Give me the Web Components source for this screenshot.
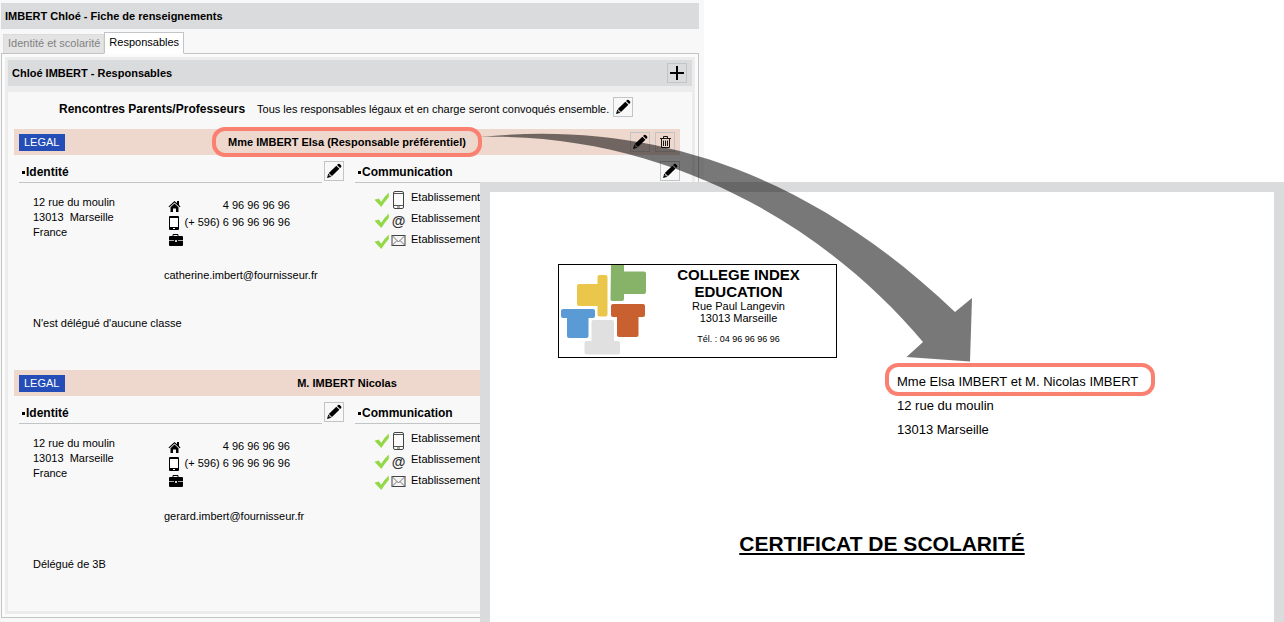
<!DOCTYPE html>
<html lang="fr">
<head>
<meta charset="utf-8">
<meta name="viewport" content="width=device-width, initial-scale=1">
<title>Fiche de renseignements</title>
<style>
  html, body { margin: 0; }
  body { background: #fff; color: #000; font: 11px/15px "Liberation Sans", Arial, sans-serif; }
</style>
</head>
<body>
<responsables-page></responsables-page>

<script>
const define = (name, html, setup) => {
  const template = document.createElement('template');
  template.innerHTML = html;
  customElements.define(name, class extends HTMLElement {
    constructor() {
      super();
      this.attachShadow({ mode: 'open' }).append(template.content.cloneNode(true));
    }
    connectedCallback() { if (setup) setup(this, this.shadowRoot); }
  });
};

const ICONS = {
  pencil: [20, 20, '<path d="M3 17l1.300-4.400 3.200 3.100z"/><path d="M4.800 11.900L12.300 4.700l3.100 3-7.400 7.400z"/><path d="M13 4l1.100-1q.8-.6 1.600.1l1.400 1.400q.7.8 0 1.500l-1 1z"/><path d="M4.800 14.200l1.200 1.200" stroke="#bbb" stroke-width="1"/>'],
  plus: [20, 20, '<path d="M9 3h2v6h6v2h-6v6H9v-6H3V9h6z"/>'],
  trash: [20, 20, '<path d="M5 6.500h11M8.500 6V4.500h4V6M6.500 7v8.500h8V7M8.500 8.500v5.500M10.500 8.500v5.500M12.500 8.500v5.500" fill="none" stroke="#000" stroke-width=".9"/>'],
  home: [14, 14, '<path d="M.5 7.500L6.500 2l2.500 2.200V2h2v4l1.500 1.500-.8.800-5.200-4.700-5.200 4.700z"/><path d="M2.500 8.200l4-3.600 4 3.600V13H8V9.500H5V13H2.500z"/>'],
  tablet: [14, 14, '<rect x="1" y="0" width="10" height="14" rx="1"/><path d="M2 2h8v9H2z" fill="#fff"/><path d="M5 12h2v1H5z" fill="#fff"/>'],
  briefcase: [15, 14, '<path d="M5 3.500v-2h5v2" fill="none" stroke="#000"/><rect x="1" y="3" width="14" height="10" rx="1"/><path d="M1 7.500h5M10 7.500h5" stroke="#aaa"/><path d="M7 7h2v2H7z" fill="#ccc"/>'],
  check: [16, 20, '<path d="M.5 9.800l4.200-1.300 2.500 3.300Q10.500 6.500 14.800 2.500v4.600Q10.500 12 7.300 17z" fill="#93d846"/>'],
  phone: [15, 20, '<rect x="2.500" y="1.500" width="10" height="17" rx="1.500" fill="#fbfbfb" stroke="#444"/><path d="M2.500 3.500h10M2.500 15.500h10M6 17h3" stroke="#555"/>'],
  mail: [15, 20, '<rect x="1" y="3.500" width="13" height="10" fill="#f5f5f5" stroke="#444"/><path d="M1 3.500l6.500 6.500 6.500-6.500M1 13.500l5-5M14 13.500L9 8.500" fill="none" stroke="#777"/>']
};

customElements.define('ui-icon', class extends HTMLElement {
  connectedCallback() {
    const [w, h, shape] = ICONS[this.getAttribute('name')];
    if (this.shadowRoot) return;
    this.attachShadow({ mode: 'open' }).innerHTML =
      `<style>:host{display:block;flex:none}svg{display:block}</style>
       <svg width="${w}" height="${h}" viewBox="0 0 ${w} ${h}" aria-hidden="true">${shape}</svg>`;
  }
});

define('icon-button', `
  <style>
    :host { display: block; flex: none; }
    button { display: block; width: 20px; height: 20px; box-sizing: border-box;
      padding: 0; border: 1px solid #c3c4c6; background: transparent; }
    ui-icon { margin: -1px; }
  </style>
  <button type="button"><ui-icon name="plus"></ui-icon></button>`,
  (host, root) => {
    const icon = document.createElement('ui-icon');
    icon.setAttribute('name', host.getAttribute('icon'));
    root.querySelector('button').setAttribute('aria-label', host.getAttribute('label'));
    root.querySelector('button').replaceChildren(icon);
  });

define('title-bar', `
  <style>
    :host { display: flex; align-items: center; justify-content: space-between; height: 26px;
      padding: 0 5px 0 4px; background: #dadbdd; }
    h2 { margin: 0; font: bold 11px/15px "Liberation Sans", Arial, sans-serif; }
  </style>
  <h2><slot></slot></h2><slot name="action"></slot>`);

define('tab-strip', `
  <style>
    :host { display: block; padding: 0 2px; margin-bottom: -1px; }
    nav { display: flex; align-items: flex-end; }
    button { font: inherit; border: 0; box-sizing: border-box; margin: 0; white-space: nowrap; }
    .off { height: 19px; margin-bottom: 1px; color: #818181; background: #e3e3e3;
      border: 1px solid #dcdcdc; border-bottom: 0; padding: 0 3px 2px 4px; }
    .on { height: 22px; background: #fff; border: 1px solid #c3c4c6; border-bottom-color: #fff;
      color: #000; padding: 0 4px 2px; z-index: 1; }
  </style>
  <nav role="tablist">
    <button class="off" type="button" role="tab" aria-selected="false">Identité et scolarité</button>
    <button class="on" type="button" role="tab" aria-selected="true">Responsables</button>
  </nav>`);

define('high-light', `
  <style>
    :host { display: block; border: 4px solid #fa8072; border-radius: 13px; white-space: nowrap; }
  </style><slot></slot>`);

define('section-head', `
  <style>
    :host { display: flex; align-items: flex-end; gap: 2px; height: 28px; }
    h4 { flex: 1; margin: 0; padding: 0 0 2px 3px; border-bottom: 1px solid #c3c4c6;
      display: flex; align-items: center; gap: 1px; font: bold 12px/15px "Liberation Sans", Arial, sans-serif; }
    h4::before { content: ""; width: 3px; height: 3px; background: #000; }
    icon-button { margin-bottom: 2px; }
  </style>
  <h4><slot></slot></h4><icon-button icon="pencil" label="Modifier"></icon-button>`);

define('channel-row', `
  <style>
    :host { display: flex; gap: 1px; height: 21px; }
    .sign { width: 15px; text-align: center; font: bold 14px/20px "Liberation Sans", Arial, sans-serif; color: #333; }
    .text { padding-left: 4px; white-space: nowrap; }
  </style>
  <ui-icon name="check"></ui-icon><span class="sign"></span><span class="text">Etablissement</span>`,
  (host, root) => {
    const kind = host.getAttribute('kind');
    root.querySelector('.sign').innerHTML = kind === 'email' ? '@' : `<ui-icon name="${kind}"></ui-icon>`;
  });

define('guardian-card', `
  <style>
    :host { display: block; }
    header { display: grid; grid-template: 26px / 1fr auto 1fr; align-items: center;
      padding: 0 5px; background: #eed7cc; }
    .badge { justify-self: start; padding: 1px 6px 1px 5px; background: #244db7; color: #fff; }
    h3 { margin: 0; font: bold 11px/22px "Liberation Sans", Arial, sans-serif; white-space: nowrap; }
    high-light { padding: 0 12px; }
    .tools { display: flex; gap: 5px; justify-self: end; }
    .columns { display: grid; grid-template-columns: 1fr 1fr; gap: 11px; padding-left: 5px; }
    .identity { display: grid; grid-template-columns: 131px 1fr; row-gap: 33px; padding: 12px 0 39px 14px; }
    address { font-style: normal; }
    ul { list-style: none; margin: 0; padding: 2px 0 20px 4px; }
    li { display: grid; grid-template-columns: 14px 106px; gap: 2px; align-items: center; height: 17px; text-align: right; white-space: nowrap; }
    .mail { color: inherit; text-decoration: none; }
    .role { grid-column: 1 / -1; }
    .channels { padding: 7px 0 0 19px; }
  </style>
  <header>
    <span class="badge">LEGAL</span>
    <h3></h3>
    <span class="tools"></span>
  </header>
  <div class="columns">
    <section>
      <section-head>Identité</section-head>
      <div class="identity">
        <address>12 rue du moulin<br>13013&nbsp; Marseille<br>France</address>
        <div>
          <ul>
            <li><ui-icon name="home"></ui-icon><span>4 96 96 96 96</span></li>
            <li><ui-icon name="tablet"></ui-icon><span>(+ 596) 6 96 96 96 96</span></li>
            <li><ui-icon name="briefcase"></ui-icon></li>
          </ul>
          <a class="mail"></a>
        </div>
        <div class="role"><slot></slot></div>
      </div>
    </section>
    <section>
      <section-head>Communication</section-head>
      <div class="channels">
        <channel-row kind="phone"></channel-row>
        <channel-row kind="email"></channel-row>
        <channel-row kind="mail"></channel-row>
      </div>
    </section>
  </div>`,
  (host, root) => {
    const name = host.getAttribute('name');
    const mail = root.querySelector('.mail');
    mail.textContent = host.getAttribute('mail');
    mail.href = 'mailto:' + mail.textContent;
    if (host.hasAttribute('preferred')) {
      root.querySelector('h3').innerHTML = `<high-light>${name}</high-light>`;
      root.querySelector('.tools').innerHTML =
        '<icon-button icon="pencil" label="Modifier"></icon-button><icon-button icon="trash" label="Supprimer"></icon-button>';
    } else root.querySelector('h3').textContent = name;
  });

define('student-panel', `
  <style>
    :host { display: block; background: #f8f8f8; padding: 3px 5px 4px 1px; }
    tab-strip { margin-top: 3px; }
    .sheet { border: 1px solid #c3c4c6; padding: 3px; background: #fbfbfb; }
    .frame { background: #ececec; padding: 3px; }
    .content { margin-top: 6px; background: #f8f8f8; padding: 0 12px 0 6px; }
    .meeting { display: flex; padding: 5px 0 12px 45px; gap: 4px; }
    .meeting p { display: flex; gap: 12px; margin: 0; padding-top: 5px; white-space: nowrap; }
    .meeting b { font-size: 12px; }
  </style>
  <title-bar>IMBERT Chloé - Fiche de renseignements</title-bar>
  <tab-strip></tab-strip>
  <div class="sheet"><div class="frame">
    <title-bar>Chloé IMBERT - Responsables<icon-button slot="action" icon="plus" label="Ajouter un responsable"></icon-button></title-bar>
    <div class="content">
      <div class="meeting">
        <p><b>Rencontres Parents/Professeurs</b><span>Tous les responsables légaux et en charge seront convoqués ensemble.</span></p>
        <icon-button icon="pencil" label="Modifier"></icon-button>
      </div>
      <guardian-card preferred name="Mme IMBERT Elsa (Responsable préférentiel)" mail="catherine.imbert@fournisseur.fr">N'est délégué d'aucune classe</guardian-card>
      <guardian-card name="M. IMBERT Nicolas" mail="gerard.imbert@fournisseur.fr">Délégué de 3B</guardian-card>
    </div>
  </div></div>`);

define('letter-head', `
  <style>
    :host { display: flex; width: 277px; border: 1px solid #000; }
    svg { display: block; flex: none; }
    div { flex: 1; padding: 1px 8px 11px 0; text-align: center; line-height: 12px; }
    h2 { margin: 0; font: bold 15px/17px "Liberation Sans", Arial, sans-serif; }
    p { margin: 0; }
    .tel { margin-top: 9px; font-size: 9px; }
  </style>
  <svg width="90" height="92" viewBox="559 265 90 92" role="img" aria-label="Logo">
    <path d="M611 265h13v6.500h20q2 0 2 2V292q0 2-2 2h-20v5q0 2-2 2h-10q-1.500 0-1.500-2z" fill="#87b368"/>
    <path d="M579 284h18.500v-7q0-2 2-2h6q2 0 2 2v37.500q0 2-2 2h-6q-2 0-2-2V306H579q-2 0-2-2v-18q0-2 2-2z" fill="#eac74a"/>
    <path d="M563 309h30q2 0 2 2v5q0 2-2 2h-4.500v18q0 2-2 2H569q-2 0-2-2v-18h-4q-2 0-2-2v-5q0-2 2-2z" fill="#5b9bd5"/>
    <path d="M613 304h30q2 0 2 2v9q0 2-2 2h-4.500v18q0 2-2 2H619q-2 0-2-2v-18h-4q-2 0-2-2v-9q0-2 2-2z" fill="#c96030"/>
    <path d="M593.500 320H612q2 0 2 2v19h4q2 0 2 2v9.500q0 2-2 2h-31.500q-2 0-2-2V343q0-2 2-2h5v-19q0-2 2-2z" fill="#e0e0e0"/>
  </svg>
  <div>
    <h2>COLLEGE INDEX<br>EDUCATION</h2>
    <p>Rue Paul Langevin</p>
    <p>13013 Marseille</p>
    <p class="tel">Tél. : 04 96 96 96 96</p>
  </div>`);

define('certificate-page', `
  <style>
    :host { display: block; background: #fff; border: 10px solid #dadbdd; border-bottom: 0; padding-top: 72px; }
    letter-head { margin-left: 68px; }
    .recipient { display: flex; flex-direction: column; align-items: flex-start; gap: 4px;
      margin: 5px 0 0 395px; font-size: 13px; line-height: 20px; }
    .recipient high-light { padding: 4px 13px 0 8px; line-height: 21px; margin-bottom: -4px; }
    .recipient span { padding-left: 12px; }
    h1 { margin: 92px 0 0; text-align: center; font: bold 21px/24px "Liberation Sans", Arial, sans-serif;
      text-decoration: underline; text-decoration-thickness: 2px; text-underline-offset: 2px; text-decoration-skip-ink: none; }
  </style>
  <letter-head></letter-head>
  <div class="recipient">
    <high-light>Mme Elsa IMBERT et M. Nicolas IMBERT</high-light>
    <span>12 rue du moulin</span>
    <span>13013 Marseille</span>
  </div>
  <h1>CERTIFICAT DE SCOLARITÉ</h1>`);

define('link-arrow', `
  <style>
    :host { position: absolute; left: 480px; top: 130px; pointer-events: none; }
    svg { display: block; }
  </style>
  <svg width="494" height="233" viewBox="480 130 494 233" aria-hidden="true">
    <path d="M480 137C640 121 800 164 955 312L972 298 970 361.500 906.500 357 923 342C825 225 665 132 480 137z" fill="#000" fill-opacity=".53"/>
  </svg>`);

define('responsables-page', `
  <style>
    :host { position: relative; display: grid; min-height: 100vh; overflow: hidden;
      grid-template-columns: 480px 224px minmax(580px, 1fr); grid-template-rows: 182px 1fr; }
    student-panel { grid-area: 1 / 1 / 3 / 3; }
    certificate-page { grid-area: 2 / 2 / 3 / 4; z-index: 1; }
    link-arrow { z-index: 2; }
  </style>
  <student-panel></student-panel>
  <certificate-page></certificate-page>
  <link-arrow></link-arrow>`);
</script>
</body>
</html>
